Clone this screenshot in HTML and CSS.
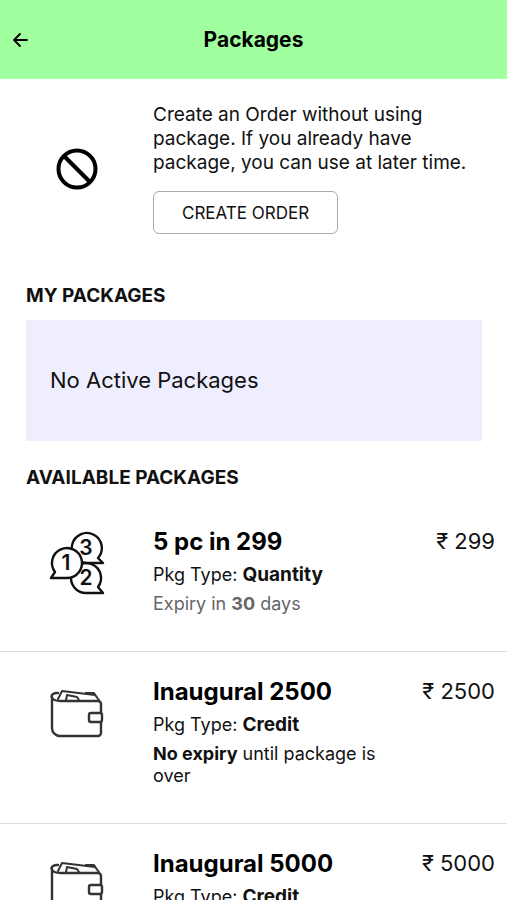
FILE: index.html
```html
<!DOCTYPE html>
<html lang="en">
<head>
<meta charset="utf-8">
<meta name="viewport" content="width=device-width, initial-scale=1">
<title>Packages</title>
<link rel="stylesheet" href="styles.css">
</head>
<body>
<svg class="sprite" aria-hidden="true">
  <symbol id="wallet" viewBox="0 0 54 50">
    <g fill="none" stroke="#333" stroke-width="2.400" stroke-linejoin="round" stroke-linecap="round">
      <path d="M2 8v31a8 8 0 0 0 8 8h38a3 3 0 0 0 3-3V34M51 23V15a3 3 0 0 0-3-3H11C0 12 -1 5 6 4h2"/>
      <path d="M8 10L12 2l33 4 4 5M36 4h8l4 6" stroke-width="2"/>
      <path d="M16 11l1-5 10 2 2 3" stroke-width="2"/>
      <rect x="39" y="24" width="13" height="9" rx="2"/>
    </g>
  </symbol>
</svg>
<div class="app">
  <header class="bar">
    <button class="back" type="button" aria-label="Back">
      <svg width="16" height="16" viewBox="0 0 16 16" fill="none" stroke="#000" stroke-width="1.8" stroke-linecap="round" stroke-linejoin="round"><path d="M15 8H2M8 2L2 8l6 6"/></svg>
    </button>
    <h1>Packages</h1>
  </header>
  <main>
    <section class="intro">
      <svg class="ban" viewBox="0 0 42 42" fill="none" stroke="#000" stroke-width="4" aria-hidden="true"><circle cx="21" cy="21" r="18.5"/><path d="M8 8l26 26"/></svg>
      <div>
        <p>Create an Order without using package. If you already have package, you can use at later time.</p>
        <button class="create" type="button">CREATE ORDER</button>
      </div>
    </section>
    <section class="mine">
      <h2>MY PACKAGES</h2>
      <p class="empty">No Active Packages</p>
    </section>
    <section>
      <h2 class="available">AVAILABLE PACKAGES</h2>
      <ul class="list">
        <li>
          <svg class="quantity" viewBox="0 0 56 64" aria-hidden="true">
            <g fill="#fff" stroke="#111" stroke-width="2.4" stroke-linejoin="round">
              <path d="M54 62H37a15 15 0 1 1 12-6z"/>
              <path d="M54 32H38a15 15 0 1 1 11-5z"/>
              <path d="M2 47l4-6a15 15 0 1 1 12 6z"/>
            </g>
            <g fill="#111" text-anchor="middle"><text x="37" y="24">3</text><text x="17" y="39">1</text><text x="37" y="54">2</text></g>
          </svg>
          <div class="info">
            <h3>5 pc in 299</h3>
            <p class="type">Pkg Type: <b>Quantity</b></p>
            <p class="expiry muted">Expiry in <b>30</b> days</p>
          </div>
          <span class="price">₹ 299</span>
        </li>
        <li>
          <svg class="wallet" aria-hidden="true"><use href="#wallet"/></svg>
          <div class="info">
            <h3>Inaugural 2500</h3>
            <p class="type">Pkg Type: <b>Credit</b></p>
            <p class="expiry"><b>No expiry</b> until package is over</p>
          </div>
          <span class="price">₹ 2500</span>
        </li>
        <li>
          <svg class="wallet" aria-hidden="true"><use href="#wallet"/></svg>
          <div class="info">
            <h3>Inaugural 5000</h3>
            <p class="type">Pkg Type: <b>Credit</b></p>
            <p class="expiry"><b>No expiry</b> until package is over</p>
          </div>
          <span class="price">₹ 5000</span>
        </li>
      </ul>
    </section>
  </main>
</div>
</body>
</html>
```
FILE: styles.css
```css
* { box-sizing: border-box; }
body, h1, h2, h3, p, ul { margin: 0; padding: 0; }
body { font-family: Inter, "Liberation Sans", sans-serif; color: #111; background: #fff; }
button { font: inherit; color: inherit; cursor: pointer; }
svg { display: block; }
.sprite { position: absolute; width: 0; height: 0; }

.app { display: flex; flex-direction: column; height: 100vh; }
main { flex: 1; min-height: 0; overflow-y: auto; scrollbar-width: none; }

.bar { display: grid; grid-template-columns: 40px 1fr 40px; align-items: center; padding: 24px 0; background: #a0ff9f; }
.back { display: flex; padding: 4px 12px; border: 0; background: none; }
h1 { font-size: 21px; line-height: 31px; font-weight: 700; text-align: center; color: #000; }

.intro { display: grid; grid-template-columns: 153px 1fr; align-items: center; padding: 24px 24px 0 0; }
.ban { width: 42px; height: 42px; justify-self: center; }
.intro p { font-size: 19px; line-height: 24px; }
.create { margin-top: 16px; padding: 0 28px; height: 43px; border: 1px solid #aaa; border-radius: 6px; background: #fff; font-size: 17px; line-height: 20px; }

.mine { padding: 50px 25px 0 26px; }
h2 { font-size: 19px; line-height: 24px; font-weight: 700; }
.empty { margin-top: 12px; padding: 44px 24px; background: #efeeff; font-size: 22px; line-height: 33px; }
.available { padding: 25px 26px 0; }

.list { list-style: none; padding-top: 12px; }
.list li { display: grid; grid-template-columns: 153px 1fr 104px; align-items: start; padding: 25px 12px 36px 0; border-bottom: 1px solid #ddd; }
.quantity { width: 56px; height: 64px; margin-top: 4px; justify-self: center; }
.quantity text { font-size: 21px; font-weight: 600; }
.wallet { width: 54px; height: 50px; margin-top: 12px; justify-self: center; }
h3 { font-size: 24px; line-height: 30px; font-weight: 700; color: #000; }
.type { margin-top: 6px; font-size: 18px; line-height: 24px; }
.expiry { margin-top: 6px; font-size: 18px; line-height: 22px; }
.type b { font-size: 19px; }
.muted { color: #666; }
.price { font-size: 22px; line-height: 28px; text-align: right; }
```
